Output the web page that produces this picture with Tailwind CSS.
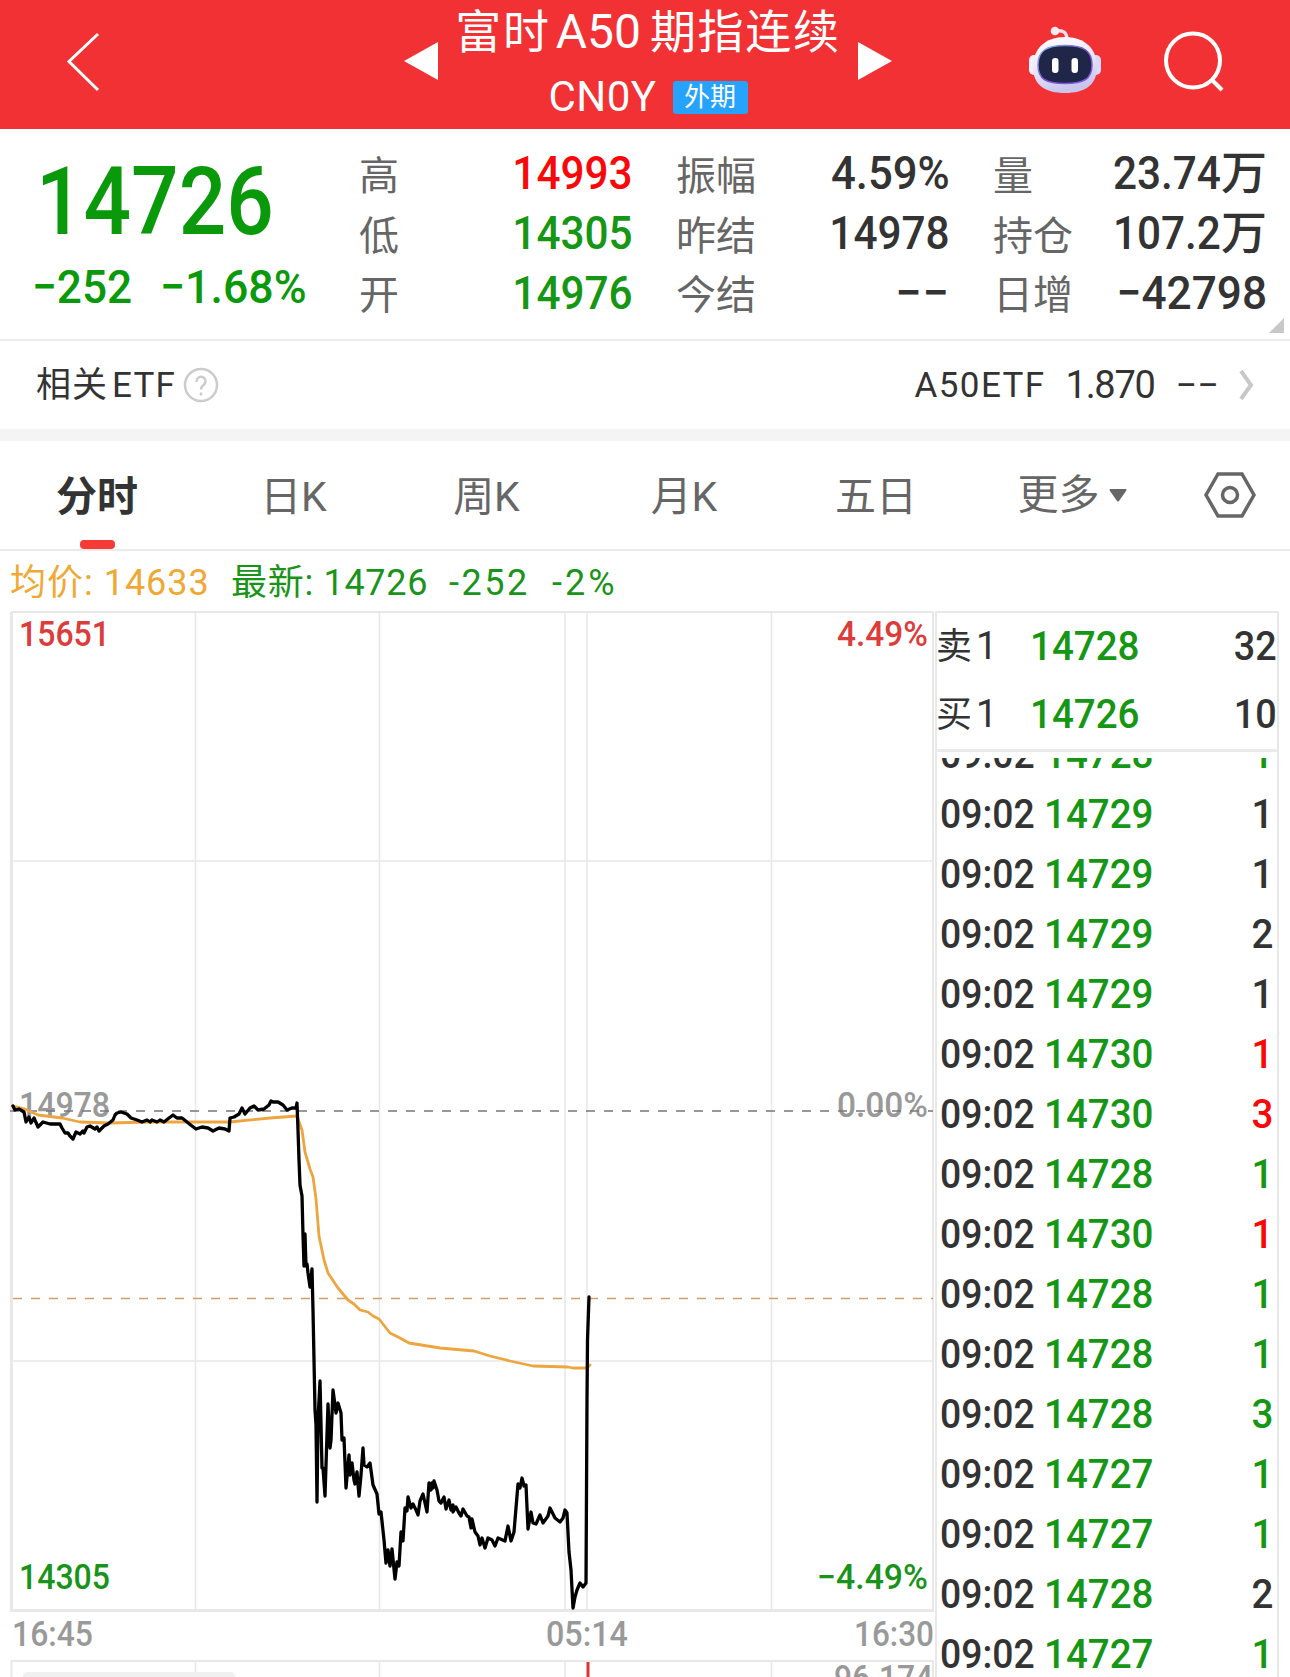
<!DOCTYPE html>
<html lang="zh-CN">
<head>
  <meta charset="UTF-8" />
  <meta name="viewport" content="width=device-width, initial-scale=1.0" />
  <title>富时A50期指连续</title>
  <script src="https://cdn.jsdelivr.net/npm/@tailwindcss/browser@4"></script>
</head>
<body class="bg-white font-[Roboto,'Noto_Sans_CJK_SC',sans-serif] text-[#333]">
  <div class="w-[1290px] h-[1677px] overflow-hidden flex flex-col">

    <!-- Header -->
    <header class="h-[129px] shrink-0 bg-[#f23135] text-white flex">
      <div class="w-[404px] pl-[66px] pt-8">
        <svg class="w-9 h-[60px]" viewBox="0 0 36 60" fill="none" stroke="#fff" stroke-width="3"><path d="M32 2 3 29.5 32 58" /></svg>
      </div>
      <svg class="w-[34px] h-[38px] mt-[42px]" viewBox="0 0 34 38" fill="#fff"><path d="M34 0V38L0 19Z" /></svg>
      <div class="w-[420px] flex flex-col items-center">
        <h1 class="h-[64px] flex items-center whitespace-nowrap text-[46px] leading-none tracking-[1.7px]">
          <span>富时</span><span class="text-[48px] tracking-normal ml-[5px] mr-[9px]">A50</span><span>期指连续</span>
        </h1>
        <div class="h-[62px] mt-[2px] flex items-center gap-4">
          <span class="text-[42px] leading-none tracking-[0.5px]">CN0Y</span>
          <span class="w-[75px] h-[33px] rounded-[3px] bg-[#26a2ff] text-[26px] leading-[33px] text-center">外期</span>
        </div>
      </div>
      <svg class="w-[34px] h-[38px] mt-[42px]" viewBox="0 0 34 38" fill="#fff"><path d="M0 0V38L34 19Z" /></svg>
      <svg class="w-[74px] h-[70px] ml-[136px] mt-[25px]" viewBox="0 0 74 70">
        <defs>
          <linearGradient id="head" x1="0" y1="0" x2="0.3" y2="1"><stop offset="0" stop-color="#fff" /><stop offset="0.5" stop-color="#eeeafa" /><stop offset="1" stop-color="#c9c6ee" /></linearGradient>
          <linearGradient id="rim" x1="0" y1="0" x2="1" y2="1"><stop offset="0" stop-color="#7fc4e8" /><stop offset="0.5" stop-color="#7a4fd0" /><stop offset="1" stop-color="#7f5fe6" /></linearGradient>
        </defs>
        <path d="M28 6Q39 4 39 15" fill="none" stroke="#f3dfe8" stroke-width="3.5" />
        <circle cx="27" cy="6" r="4.3" fill="#fbeaf0" />
        <rect x="1" y="30" width="10" height="20" rx="5" fill="#f2effc" />
        <rect x="63" y="30" width="10" height="20" rx="5" fill="#dcd8f6" />
        <path d="M37 12C57 12 69 24 69 42C69 60 57 68 37 68C17 68 5 60 5 42C5 24 17 12 37 12Z" fill="url(#head)" />
        <path d="M37 20.500C56 20.500 64 26 64 40C64 54 56 58.500 37 58.500C18 58.500 10 54 10 40C10 26 18 20.500 37 20.500Z" fill="#1f2647" stroke="url(#rim)" stroke-width="1.500" />
        <rect x="24" y="33" width="6.5" height="15" rx="3" fill="#fff" />
        <rect x="43.500" y="33" width="6.5" height="15" rx="3" fill="#fff" />
      </svg>
      <svg class="w-[62px] h-[62px] ml-[61px] mt-[30px]" viewBox="0 0 62 62" fill="none" stroke="#fff" stroke-width="4"><circle cx="30" cy="30.500" r="27" /><path d="M48 49 59 60" /></svg>
    </header>

    <!-- Quote summary -->
    <section class="relative h-[212px] shrink-0 border-b-2 border-[#ebebeb] flex">
      <div class="w-[360px] text-[#0a990a] font-medium">
        <div class="pl-[36px] mt-[25px] h-[96px] text-[94px] leading-[96px]"><span class="inline-block origin-left scale-x-[0.89]">14726</span></div>
        <div class="pl-[32px] mt-[9px] h-[56px] flex text-[47px] leading-[56px] whitespace-nowrap">
          <span class="w-[128px] origin-left scale-x-[0.94]">−252</span><span class="origin-left scale-x-[0.95]">−1.68%</span>
        </div>
      </div>
      <div class="w-[273px] pt-[14px]">
        <div class="h-[60px] flex justify-between items-center"><span class="pt-2 -ml-[1px] text-[40px] text-[#666]">高</span><span class="text-[47px] font-medium origin-right scale-x-90 text-[#f80808]">14993</span></div>
        <div class="h-[60px] flex justify-between items-center"><span class="pt-2 -ml-[1px] text-[40px] text-[#666]">低</span><span class="text-[47px] font-medium origin-right scale-x-90 text-[#159615]">14305</span></div>
        <div class="h-[60px] flex justify-between items-center"><span class="pt-1.5 -ml-[1px] text-[40px] text-[#666]">开</span><span class="text-[47px] font-medium origin-right scale-x-90 text-[#159615]">14976</span></div>
      </div>
      <div class="w-[274px] ml-[43px] pt-[14px]">
        <div class="h-[60px] flex justify-between items-center"><span class="pt-2 text-[40px] text-[#666]">振幅</span><span class="text-[47px] font-medium origin-right scale-x-[0.93]">4.59%</span></div>
        <div class="h-[60px] flex justify-between items-center"><span class="pt-2 text-[40px] text-[#666]">昨结</span><span class="text-[47px] font-medium origin-right scale-x-90">14978</span></div>
        <div class="h-[60px] flex justify-between items-center"><span class="pt-1.5 text-[40px] text-[#666]">今结</span><span class="text-[47px] font-medium tracking-[1px]">−−</span></div>
      </div>
      <div class="w-[274px] ml-[43px] pt-[14px] whitespace-nowrap text-[47px] leading-[60px] font-medium">
        <div class="h-[60px] flex items-center"><span class="pt-2 mr-auto text-[40px] leading-[60px] font-normal text-[#666]">量</span><span class="origin-right scale-x-90">23.74</span><span class="text-[46px]">万</span></div>
        <div class="h-[60px] flex items-center"><span class="pt-2 mr-auto text-[40px] leading-[60px] font-normal text-[#666]">持仓</span><span class="origin-right scale-x-90">107.2</span><span class="text-[46px]">万</span></div>
        <div class="h-[60px] flex items-center"><span class="pt-1.5 mr-auto text-[40px] leading-[60px] font-normal text-[#666]">日增</span><span class="origin-right scale-x-[0.94]">−42798</span></div>
      </div>
      <svg class="absolute right-[6px] bottom-[6px] w-[15px] h-[15px]" viewBox="0 0 15 15" fill="#c8c8c8"><path d="M15 0V15H0Z" /></svg>
    </section>

    <!-- Related ETF -->
    <section class="h-[100px] shrink-0 border-b-[12px] border-[#f4f4f4] pl-[36px] pr-[35px] flex items-center text-[35px] leading-none whitespace-nowrap">
      <span class="tracking-[1px]">相关</span><span class="ml-[4px] tracking-[1.2px]">ETF</span>
      <svg class="w-[36px] h-[36px] ml-[7px]" viewBox="0 0 36 36" fill="none" stroke="#ccc" stroke-width="2.500"><circle cx="18" cy="18" r="16" /><path d="M13.500 15C13.500 8 22.500 8 22.500 14.500 22.500 18 18 18 18 22.500M18 25.500V28.500" /></svg>
      <span class="ml-auto tracking-[1.4px]">A50ETF</span>
      <span class="ml-[20px] text-[38px] tracking-[-1.3px]">1.870</span>
      <span class="ml-[21px] text-[38px]">−−</span>
      <svg class="w-[16px] h-[30px] ml-[20px]" viewBox="0 0 16 30" fill="none" stroke="#c8c8c8" stroke-width="4"><path d="M2 1 12 15 2 29" /></svg>
    </section>

    <!-- Period tabs -->
    <nav class="h-[110px] shrink-0 border-b-2 border-[#ebebeb] flex text-[41px] leading-[113px] text-[#666] whitespace-nowrap">
      <div class="relative w-[194px] text-center font-bold text-[#333]">分时<span class="absolute left-[80px] bottom-0 w-[35px] h-[9px] rounded-[4px] bg-[#f53b36]"></span></div>
      <div class="w-[199px] text-center">日K</div>
      <div class="w-[187px] text-center">周K</div>
      <div class="w-[208px] text-center">月K</div>
      <div class="w-[176px] text-center">五日</div>
      <div class="w-[216px] h-[108px] flex items-center justify-center gap-[9px]">更多<svg class="w-[18px] h-[13px]" viewBox="0 0 18 13" fill="#666"><path d="M1 0H17Q18 0 17 2L10 12Q9 13 8 12L1 2Q0 0 1 0Z" /></svg></div>
      <svg class="w-[52px] h-[46px] mt-[31px] ml-[24px]" viewBox="0 0 52 46" fill="none" stroke="#666" stroke-width="3.500"><path d="M14 2H38L50 23 38 44H14L2 23Z" /><circle cx="26" cy="23" r="7.500" /></svg>
    </nav>

    <div class="h-[60px] shrink-0 pl-[10px] flex text-[36px] leading-[64px] tracking-[0.7px] text-[#199319] whitespace-nowrap">
      <span class="w-[221px] text-[#f0a835] tracking-[1px]">均价: 14633</span>
      <span class="w-[218px]">最新: 14726</span>
      <span class="w-[103px] tracking-[2.5px]">-252</span>
      <span class="tracking-[3px]">-2%</span>
    </div>

    <main class="flex">
      <!-- Intraday chart; y is shifted so page coordinates can be used -->
      <svg class="w-[935px] h-[1066px] shrink-0" viewBox="0 611 935 1066" fill="none">
        <g stroke="#e8e8e8" stroke-width="2">
          <path d="M195.500 612V1610M379.500 612V1610M565 612V1610M587 612V1610M771.500 612V1610M12 861H933M12 1361H933" stroke-width="1.500" />
          <path d="M11 612H934M933 612V1610" />
          <path d="M11.500 612V1610.500H934" stroke-width="3" />
          <path d="M11.500 1677V1661H933V1677" />
          <path d="M195.500 1661V1677M379.500 1661V1677M565 1661V1677M771.500 1661V1677" stroke-width="1.500" />
        </g>
        <rect x="23" y="1672" width="212" height="20" rx="4" fill="#f0f0f0" />
        <path d="M588 1662V1677" stroke="#e03232" stroke-width="3" />
        <g class="text-[35px] font-medium">
          <text x="19" y="646" fill="#dc3c3a" textLength="91" lengthAdjust="spacingAndGlyphs">15651</text>
          <text x="837" y="646" fill="#dc3c3a" textLength="91" lengthAdjust="spacingAndGlyphs">4.49%</text>
          <text x="19" y="1117" fill="#999" textLength="91" lengthAdjust="spacingAndGlyphs">14978</text>
          <text x="837" y="1117" fill="#999" textLength="91" lengthAdjust="spacingAndGlyphs">0.00%</text>
          <text x="19" y="1589" fill="#199319" textLength="91" lengthAdjust="spacingAndGlyphs">14305</text>
          <text x="817" y="1589" fill="#199319" textLength="111" lengthAdjust="spacingAndGlyphs">−4.49%</text>
          <text x="12" y="1646" fill="#999" textLength="81" lengthAdjust="spacingAndGlyphs">16:45</text>
          <text x="546" y="1646" fill="#999" textLength="82" lengthAdjust="spacingAndGlyphs">05:14</text>
          <text x="854" y="1646" fill="#999" textLength="80" lengthAdjust="spacingAndGlyphs">16:30</text>
          <text x="834" y="1690" fill="#999" textLength="99" lengthAdjust="spacingAndGlyphs">96.174</text>
        </g>
        <path d="M10 1111H933" stroke="#777" stroke-width="1.500" stroke-dasharray="9 9" />
        <path d="M13 1298.500H933" stroke="#d0a06c" stroke-width="1.500" stroke-dasharray="9 9" />
        <path stroke="#eda540" stroke-width="2.800" stroke-linejoin="round" stroke-linecap="round" d="M13 1106L25 1109 38 1115 62 1118 80 1122 110 1123 150 1122 230 1122 270 1118 297 1116 302 1130 305 1152 310 1169 313 1177 316 1199 319 1236 324 1260 328 1273 338 1288 348 1300 354 1304 360 1310 368 1312 373 1316 379 1319 390 1333 400 1338 409 1343 440 1348 474 1351 490 1356 510 1361 533 1366 568 1367 573 1368 587 1368 590 1365" />
        <path stroke="#000" stroke-width="3.300" stroke-linejoin="round" stroke-linecap="round" d="M13 1106L15 1110 19 1109 24 1112 26 1122 29 1117 31 1123 34 1118 38 1127 43 1122 50 1124 60 1124 62 1128 65 1133 68 1133 70 1136 73 1139 76 1132 80 1134 83 1131 84 1133 87 1127 90 1126 95 1129 97 1127 99 1131 104 1126 108 1124 113 1120 115 1115 117 1113 121 1112 127 1114 131 1118 137 1120 142 1122 147 1120 150 1122 152 1120 157 1122 160 1120 164 1122 169 1118 173 1115 177 1118 182 1118 187 1122 192 1126 196 1129 202 1127 208 1128 213 1131 219 1128 225 1129 229 1131 230 1118 234 1117 239 1114 242 1108 245 1114 250 1108 254 1106 258 1110 264 1109 269 1105 271 1101 273 1102 278 1102 283 1105 287 1110 292 1108 296 1108 297 1103 298 1130 299 1160 300 1185 302 1196 303 1235 304 1266 305 1234 306 1266 307 1264 308 1273 310 1287 312 1269 313 1310 315 1410 316 1425 317 1502 318 1420 320 1381 322 1468 323 1468 325 1496 328 1404 330 1448 331 1440 333 1390 336 1413 338 1403 341 1413 342 1440 344 1438 346 1488 349 1455 350 1475 352 1463 354 1480 355 1484 357 1472 359 1496 361 1475 363 1448 364 1465 367 1467 370 1463 373 1485 377 1494 379 1514 381 1512 384 1540 386 1563 388 1550 390 1566 392 1549 395 1579 397 1562 399 1566 401 1532 403 1541 405 1508 407 1511 408 1497 411 1508 413 1504 416 1510 418 1515 420 1501 423 1494 425 1503 427 1512 429 1483 431 1490 432 1483 433 1488 434 1481 437 1490 439 1501 441 1503 444 1497 446 1509 449 1500 451 1510 453 1505 453 1512 456 1507 459 1513 461 1516 463 1509 467 1516 469 1517 471 1528 472 1519 475 1532 478 1536 480 1545 482 1538 485 1548 488 1538 492 1540 495 1546 498 1538 505 1541 508 1526 511 1541 514 1532 518 1484 520 1488 522 1478 524 1486 526 1485 528 1529 531 1512 533 1523 536 1524 540 1515 543 1523 548 1516 550 1508 555 1518 560 1522 563 1518 565 1510 567 1513 569 1552 571 1570 573 1608 575 1597 577 1590 580 1583 583 1587 586 1583 587 1400 587.500 1340 589 1297" />
      </svg>

      <!-- Order book and ticks -->
      <aside class="w-[344px] h-[1066px] border-t-2 border-x-2 border-[#e8e8e8] flex flex-col">
        <div class="h-[139px] shrink-0 border-b-3 border-[#ebebeb] text-[41px] font-medium whitespace-nowrap">
          <div class="h-[67px] flex items-center leading-[67px]"><span class="w-[94px] -ml-[1px] text-[36px] font-normal">卖<span class="ml-[4px] text-[38px]">1</span></span><span class="text-[#159615] origin-left scale-x-[0.94]">14728</span><span class="ml-auto origin-right scale-x-[0.92]">32</span></div>
          <div class="h-[69px] flex items-center leading-[69px]"><span class="w-[94px] -ml-[1px] text-[36px] font-normal">买<span class="ml-[4px] text-[38px]">1</span></span><span class="text-[#159615] origin-left scale-x-[0.94]">14726</span><span class="ml-auto origin-right scale-x-[0.92]">10</span></div>
        </div>
        <div class="mt-[6px] flex-1 overflow-hidden"><div id="ticks" class="-mt-[34px]"></div></div>
      </aside>
    </main>
  </div>

  <script>
    const colors = { g: "text-[#159615]", r: "text-[#f80808]", k: "text-[#333]" };
    const ticks = [
      [14728, 1, "g"], [14729, 1, "k"], [14729, 1, "k"], [14729, 2, "k"], [14729, 1, "k"],
      [14730, 1, "r"], [14730, 3, "r"], [14728, 1, "g"], [14730, 1, "r"], [14728, 1, "g"],
      [14728, 1, "g"], [14728, 3, "g"], [14727, 1, "g"], [14727, 1, "g"], [14728, 2, "k"],
      [14727, 1, "g"]
    ];
    document.getElementById("ticks").innerHTML = ticks.map(([price, qty, c]) => `
      <div class="h-[60px] flex items-center pl-[3px] pr-[4px] text-[41px] leading-[60px] font-medium">
        <span class="w-[104px] origin-left scale-x-[0.91]">09:02</span>
        <span class="text-[#159615] origin-left scale-x-[0.94]">${price}</span>
        <span class="ml-auto origin-right scale-x-[0.94] ${colors[c]}">${qty}</span>
      </div>
    `).join("");
  </script>
</body>
</html>
